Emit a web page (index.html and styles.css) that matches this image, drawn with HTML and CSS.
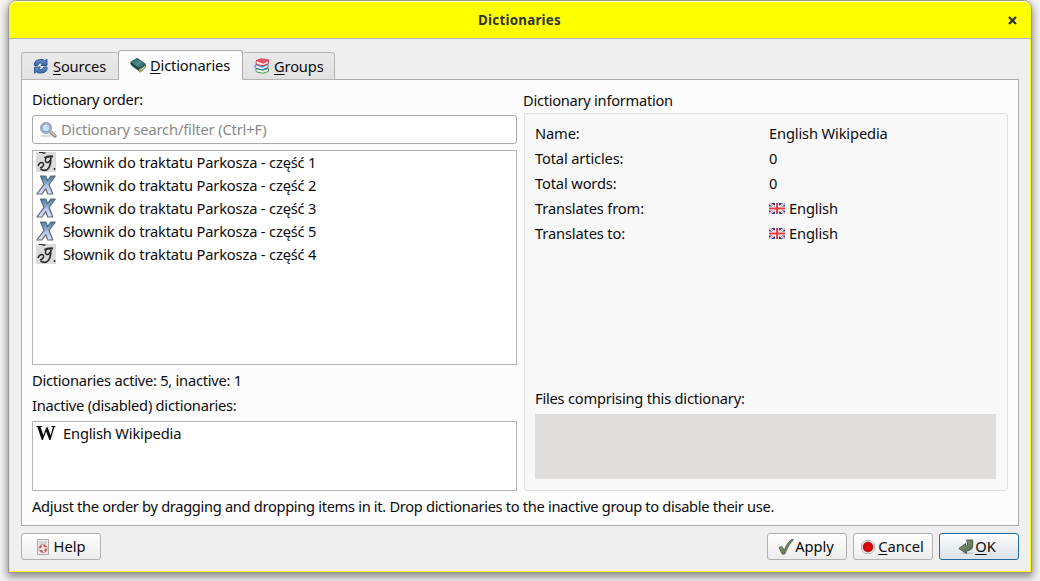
FILE: index.html
```
<!DOCTYPE html>
<html lang="en">
<head>
<meta charset="utf-8">
<title>Dictionaries</title>
<link rel="stylesheet" href="styles.css">
</head>
<body>
<svg width="0" height="0" class="defs" aria-hidden="true">
  <defs>
    <linearGradient id="gx" x1="0" y1="0" x2="0" y2="1"><stop offset="0" stop-color="#3a82b4"/><stop offset=".45" stop-color="#8fb3d8"/><stop offset=".55" stop-color="#b4c4ee"/><stop offset="1" stop-color="#dde2ff"/></linearGradient>
    <linearGradient id="gt" x1="0" y1="0" x2="1" y2="1"><stop offset="0" stop-color="#235f60"/><stop offset=".5" stop-color="#4c918c"/><stop offset="1" stop-color="#143f40"/></linearGradient>
    <linearGradient id="gg" x1="0" y1="0" x2="1" y2="1"><stop offset="0" stop-color="#92a382"/><stop offset="1" stop-color="#4c6040"/></linearGradient>
    <linearGradient id="gb" x1="0" y1="0" x2="0" y2="1"><stop offset="0" stop-color="#6d93cb"/><stop offset="1" stop-color="#3465a8"/></linearGradient>
    <radialGradient id="gr"><stop offset="0" stop-color="#ee1111"/><stop offset="1" stop-color="#c80000"/></radialGradient>
    <filter id="soft"><feGaussianBlur stdDeviation=".55"/></filter>
    <symbol id="x" viewBox="0 0 20 20">
      <path d="M4.500 1h5.300l1.700 4.800L14.800 1h4.500l-6.200 8.500 3.700 9.500h-5l-2-5.300L6 19H.9l7.200-9.600z" fill="url(#gx)" stroke="#66686e" stroke-width="1.200" stroke-linejoin="round"/>
    </symbol>
    <symbol id="scan" viewBox="0 0 20 20">
      <rect width="20" height="20" fill="#dcdcdc"/>
      <g fill="none" stroke="#2c2c2c" filter="url(#soft)">
        <path d="M3 .4h3.500l1 .8 2-.6" stroke-width="1.300"/>
        <path d="M8.500 6q3-2 8.500-1.500" stroke-width="2.200"/>
        <path d="M14.800 5.500q.3 5-1.300 9-1.500 3.500-4.500 3.800-3 0-4.500-1.500" stroke-width="1.700"/>
        <path d="M10 6q-1.500 4 .8 4.500t3.200-2.500" stroke-width="1.400"/>
        <path d="M2 14q1.500-4 4.500-3.300 2 1 .5 3.300t-3 1.500" stroke-width="1.500"/>
        <path d="M18.500 16v2" stroke-width="1.500"/>
      </g>
    </symbol>
    <symbol id="uk" viewBox="0 0 16 11">
      <rect width="16" height="11" fill="#26398f"/>
      <path d="M0 0l16 11M16 0L0 11" stroke="#fff" stroke-width="2.100"/>
      <path d="M0 0l16 11M16 0L0 11" stroke="#e66" stroke-width=".7"/>
      <path d="M8 0v11M0 5.500h16" stroke="#fff" stroke-width="4"/>
      <path d="M8 0v11M0 5.500h16" stroke="#f03c40" stroke-width="2"/>
    </symbol>
  </defs>
</svg>
<div class="window">
  <header class="titlebar">
    <span class="title">Dictionaries</span>
    <svg class="close" viewBox="0 0 9 9"><path d="M1 1l7 7M8 1L1 8" stroke="#2f3436" stroke-width="2.300"/></svg>
  </header>
  <main class="content">
    <nav class="tabs">
      <div class="tab t-sources">
        <svg class="ic" viewBox="0 0 16 16"><path d="M1.500 7.500V5Q2.500 1.700 7 1.500h3l1.700 1.200L14 1.300v6.200H8l1.800-2Q6 3.800 4.700 7.500z" fill="url(#gb)" stroke="#27508f" stroke-width=".9"/><path d="M14 9v2.500Q13 14.800 8.500 15h-3l-1.700-1.200-2.300 1.400V9h6L5.700 11Q9.500 12.700 10.800 9z" fill="url(#gb)" stroke="#27508f" stroke-width=".9"/></svg>
        <span><u>S</u>ources</span>
      </div>
      <div class="tab t-dicts active">
        <svg class="ic" viewBox="0 0 16 16"><path d="M1 6l1 2.800 8.500 6 5-4.500V8L10 12z" fill="#ddd8bd" stroke="#294b48" stroke-width=".8"/><path d="M.7 5.200L7.200 1.200l8.300 6-5.400 4.900z" fill="url(#gt)" stroke="#183f40" stroke-width=".8"/><path d="M.7 5.300v2.300l9.300 6.800v-2.300z" fill="#174748"/><path d="M9 12v2.800l1.100.6 1-1v-3.100z" fill="#c59b37"/></svg>
        <span><u>D</u>ictionaries</span>
      </div>
      <div class="tab t-groups">
        <svg class="ic" viewBox="0 0 16 16"><path d="M2 11q-.7 2 .7 3l6.500 1.300 5.300-2v-2.500z" fill="#f4f4e9" stroke="#329044" stroke-width=".9"/><path d="M2 10.500l4-1.500 9 1-5.500 2.800z" fill="#38a64c"/><path d="M1.300 7q-1 1.500.2 3L8 12l6-2.500v-3z" fill="#eef" stroke="#2366b5" stroke-width=".9"/><path d="M1.300 6.800L6 5l8 1.500-5.500 3.300z" fill="#398de0"/><path d="M2.500 2.500q-1 1.800 0 4l6.500 1.200 5.500-2.200V2.500z" fill="#fbe5e5" stroke="#d23443" stroke-width=".9"/><path d="M2.300 2.500L7 .7l8 1.300-5.500 3.200z" fill="#ef5264" stroke="#d23443" stroke-width=".7"/></svg>
        <span><u>G</u>roups</span>
      </div>
    </nav>
    <section class="panel">
      <div class="columns">
        <div class="left">
          <div class="label order">Dictionary order:</div>
          <div class="search">
            <svg class="mag" viewBox="0 0 18 18"><ellipse cx="8" cy="15" rx="7" ry="1.500" fill="#ddd"/><path d="M11 10.500l5 4.500" stroke="#8c8c8c" stroke-width="3.400" stroke-linecap="round"/><path d="M11.500 10.500l4.500 4" stroke="#c8c8c8" stroke-width="1.200" stroke-linecap="round"/><circle cx="7" cy="7" r="5.300" fill="#b5d2f4" stroke="#a8a8ad" stroke-width="1.700"/><circle cx="7" cy="7" r="4" fill="#c7defa" stroke="#729fdb"/><path d="M4.500 6q1-2 3.500-2" stroke="#fff" fill="none"/></svg>
            <span>Dictionary search/filter (Ctrl+F)</span>
          </div>
          <div class="list active-list">
            <div class="item"><svg><use href="#scan"/></svg><span>Słownik do traktatu Parkosza - część 1</span></div>
            <div class="item"><svg><use href="#x"/></svg><span>Słownik do traktatu Parkosza - część 2</span></div>
            <div class="item"><svg><use href="#x"/></svg><span>Słownik do traktatu Parkosza - część 3</span></div>
            <div class="item"><svg><use href="#x"/></svg><span>Słownik do traktatu Parkosza - część 5</span></div>
            <div class="item"><svg><use href="#scan"/></svg><span>Słownik do traktatu Parkosza - część 4</span></div>
          </div>
          <div class="label status">Dictionaries active: 5, inactive: 1</div>
          <div class="label inactive">Inactive (disabled) dictionaries:</div>
          <div class="list inactive-list">
            <div class="item"><span class="wiki">W</span><span>English Wikipedia</span></div>
          </div>
        </div>
        <div class="right">
          <div class="label group-title">Dictionary information</div>
          <div class="group">
            <div class="info">
              <span>Name:</span><span>English Wikipedia</span>
              <span>Total articles:</span><span>0</span>
              <span>Total words:</span><span>0</span>
              <span>Translates from:</span><span class="lang"><svg class="flag"><use href="#uk"/></svg>English</span>
              <span>Translates to:</span><span class="lang"><svg class="flag"><use href="#uk"/></svg>English</span>
            </div>
            <div class="label files-label">Files comprising this dictionary:</div>
            <div class="files"></div>
          </div>
        </div>
      </div>
      <div class="label hint">Adjust the order by dragging and dropping items in it. Drop dictionaries to the inactive group to disable their use.</div>
    </section>
    <footer class="buttons">
      <div class="button help"><svg class="ic" viewBox="0 0 16 16"><path d="M2.500.5h11v15h-11z" fill="#eee" stroke="#aaa"/><path d="M4 2h8v3H4z" fill="#d4d4d4"/><circle cx="8" cy="9.500" r="3" fill="none" stroke="#fff" stroke-width="2.200"/><circle cx="8" cy="9.500" r="3" fill="none" stroke="#cd5555" stroke-width="2.200" stroke-dasharray="3 1.710"/><circle cx="8" cy="9.500" r="4.100" fill="none" stroke="#c77" stroke-width=".7"/></svg><span>Help</span></div>
      <div class="spacer"></div>
      <div class="button apply"><svg class="ic" viewBox="0 0 16 16"><path d="M1 8.500l2.800-1.300 2.400 4Q9 4 13 .8l2.500-.3Q10 6 6.800 15L4.200 15.200z" fill="url(#gg)" stroke="#4d6141" stroke-width=".8"/></svg><span>Apply</span></div>
      <div class="button cancel"><svg class="ic" viewBox="0 0 16 16"><path d="M5 1.500h6L14.500 5v6L11 14.500H5L1.500 11V5z" fill="#eee" stroke="#b5b5b5"/><circle cx="8" cy="8" r="5" fill="url(#gr)" stroke="#a90b0b" stroke-width=".6"/></svg><span><u>C</u>ancel</span></div>
      <div class="button ok"><svg class="ic" viewBox="0 0 16 16"><ellipse cx="9" cy="14" rx="6" ry="1.500" fill="#ccd0d3"/><path d="M8.500 1h6.300v5.500q0 5-6.300 5.300v2.700L.8 9.500l6.700-5v3q2 0 2-2V4z" fill="url(#gg)" stroke="#40503a" stroke-width=".8"/></svg><span><u>O</u>K</span></div>
    </footer>
  </main>
</div>
</body>
</html>
```
FILE: styles.css
```
* { box-sizing: border-box; }
body {
  margin: 0;
  width: 1040px;
  height: 581px;
  overflow: hidden;
  background: #f5f5f5;
  font: 14.667px/20px "Noto Sans", sans-serif;
  color: #0c0c0c;
  white-space: nowrap;
}
.defs { display: block; }
svg { display: block; flex: none; }
.window {
  width: 1024px;
  height: 573px;
  margin-left: 8px;
  display: flex;
  flex-direction: column;
  border: 1px solid #999;
  border-radius: 9px 9px 0 0;
  background: #ff0;
  box-shadow: 0 3px 9px 1px rgba(0,0,0,.45);
}
.titlebar {
  height: 38px;
  display: grid;
  grid-template-columns: 1fr auto 1fr;
  align-items: center;
  background: #ff0;
  border-top: 1px solid #ffffc0;
  border-bottom: 1px solid #b5b5a8;
  border-radius: 8px 8px 0 0;
}
.title { grid-column: 2; font-size: 13.333px; font-weight: 700; letter-spacing: .25px; margin-right: 1px; color: #2f3436; }
.close { width: 9px; height: 9px; justify-self: end; margin-right: 14px; }
.content {
  flex: 1;
  margin: 0 1px 1px;
  padding: 11px 11px 0;
  background: #efefef;
}
.tabs { display: flex; align-items: flex-end; height: 30px; position: relative; }
.tab {
  height: 28px;
  display: flex;
  align-items: center;
  gap: 4px;
  padding: 0 0 0 11px;
  letter-spacing: -.15px;
  background: linear-gradient(#e9e9e9, #e2e2e2);
  border: 1px solid #b4b4b4;
  border-radius: 3px 3px 0 0;
}
.ic { width: 16px; height: 16px; }
.t-sources { width: 97px; border-right: 0; }
.t-groups { width: 92px; border-left: 0; }
.tab.active { width: 125px; height: 30px; background: #fcfcfc; border-color: #aaa; border-bottom-color: #fcfcfc; }
.panel {
  height: 447px;
  margin-top: -1px;
  padding: 10px;
  background: #fcfcfc;
  border: 1px solid #aaa;
}
.columns { display: flex; gap: 7px; height: 401px; }
.left { width: 485px; display: flex; flex-direction: column; }
.label { height: 20px; line-height: 18px; }
.order { letter-spacing: -.3px; }
.search {
  height: 29px;
  margin-top: 5px;
  display: flex;
  align-items: center;
  gap: 4px;
  padding-left: 6px;
  background: #fff;
  border: 1px solid #aaa;
  border-radius: 3px;
  color: #888;
  letter-spacing: -.15px;
}
.search span { padding-bottom: 2px; }
.mag { width: 18px; height: 18px; }
.list { padding: 0 3px; background: #fff; border: 1px solid #b4b4b4; }
.active-list { height: 215px; margin-top: 6px; }
.inactive-list { height: 70px; margin-top: 5px; }
.item { height: 23px; display: flex; align-items: flex-start; gap: 7px; padding-top: 1px; letter-spacing: -.165px; }
.item svg { width: 20px; height: 20px; }
.status { margin-top: 6px; letter-spacing: -.25px; }
.inactive { margin-top: 5px; letter-spacing: -.25px; }
.wiki { width: 20px; display: flex; justify-content: center; font: 700 22px/20px "Liberation Serif", serif; letter-spacing: 0; transform: scaleX(.9); }
.right { width: 484px; display: flex; flex-direction: column; }
.group-title { height: 23px; padding-top: 1px; margin-left: -1px; letter-spacing: -.27px; }
.group {
  height: 378px;
  padding: 10px;
  display: flex;
  flex-direction: column;
  border: 1px solid #e0e0e0;
  border-radius: 3px;
  background: #f8f8f8;
}
.info { display: grid; grid-template-columns: 234px 1fr; row-gap: 5px; grid-auto-rows: 20px; line-height: 18px; letter-spacing: -.14px; }
.lang { display: flex; align-items: flex-start; gap: 4px; }
.flag { width: 16px; height: 11px; margin-top: 4px; }
.files-label { margin-top: auto; letter-spacing: -.22px; }
.files { height: 65px; width: 461px; margin-top: 5px; margin-bottom: 1px; background: #dfdedd; }
.hint { margin-top: 6px; letter-spacing: -.32px; }
.buttons { display: flex; gap: 6px; margin-top: 7px; }
.spacer { flex: 1; }
.button {
  width: 80px;
  height: 27px;
  display: flex;
  align-items: center;
  justify-content: center;
  gap: 1px;
  padding-right: 2px;
  border: 1px solid #b1b1b1;
  border-radius: 3px;
  background: linear-gradient(#fefefe, #ededed);
}
.button span { padding-bottom: 2px; }
.help { gap: 3px; }
.cancel { gap: 2px; }
.ok { padding-right: 4px; border-color: #226b9e; background: linear-gradient(#fbfcfd, #dbe2e9); }
u { text-underline-offset: 2px; text-decoration-thickness: 1px; text-decoration-skip-ink: none; }
```
